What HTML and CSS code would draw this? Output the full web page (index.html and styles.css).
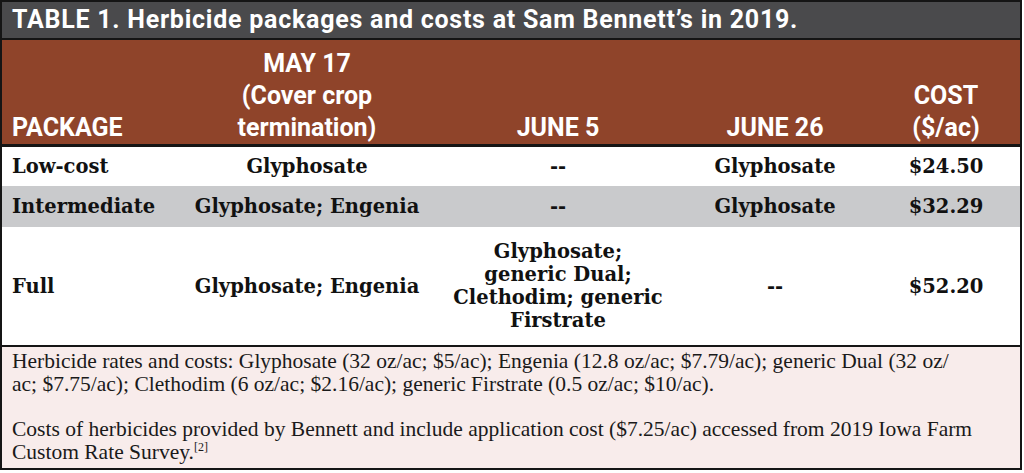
FILE: index.html
```html
<!DOCTYPE html>
<html lang="en">
<head>
<meta charset="utf-8">
<title>Table 1</title>
<link rel="stylesheet" href="styles.css">
</head>
<body>
<div class="card">
  <div class="title">TABLE 1. Herbicide packages and costs at Sam Bennett’s in 2019.</div>
  <table class="grid">
    <colgroup>
      <col class="c1"><col class="c2"><col class="c3"><col class="c4"><col class="c5">
    </colgroup>
    <thead>
      <tr>
        <th class="left">PACKAGE</th>
        <th>MAY 17<br>(Cover crop<br>termination)</th>
        <th>JUNE 5</th>
        <th>JUNE 26</th>
        <th>COST<br>($/ac)</th>
      </tr>
    </thead>
    <tbody>
      <tr class="row first">
        <td class="left">Low-cost</td>
        <td>Glyphosate</td>
        <td>--</td>
        <td>Glyphosate</td>
        <td>$24.50</td>
      </tr>
      <tr class="row alt">
        <td class="left">Intermediate</td>
        <td>Glyphosate; Engenia</td>
        <td>--</td>
        <td>Glyphosate</td>
        <td>$32.29</td>
      </tr>
      <tr class="row tall">
        <td class="left">Full</td>
        <td>Glyphosate; Engenia</td>
        <td>Glyphosate;<br>generic Dual;<br>Clethodim; generic<br>Firstrate</td>
        <td>--</td>
        <td>$52.20</td>
      </tr>
    </tbody>
  </table>
  <div class="notes">
    <p>Herbicide rates and costs: Glyphosate (32 oz/ac; $5/ac); Engenia (12.8 oz/ac; $7.79/ac); generic Dual (32 oz/<br>ac; $7.75/ac); Clethodim (6 oz/ac; $2.16/ac); generic Firstrate (0.5 oz/ac; $10/ac).</p>
    <p>Costs of herbicides provided by Bennett and include application cost ($7.25/ac) accessed from 2019 Iowa Farm<br>Custom Rate Survey.<sup>[2]</sup></p>
  </div>
</div>
</body>
</html>
```

FILE: styles.css
```css
html, body {
  margin: 0;
  padding: 0;
  background: #ffffff;
}

.card {
  width: 1018px;
  border: 2px solid #151515;
  background: #ffffff;
}

.title {
  height: 38px;
  box-sizing: border-box;
  background: #4a4a4c;
  color: #ffffff;
  font-family: Roboto, "Liberation Sans", sans-serif;
  font-weight: 700;
  font-size: 25px;
  letter-spacing: 0.75px;
  line-height: 36px;
  padding: 0 10px;
  border-bottom: 2px solid #151515;
  white-space: nowrap;
}

.grid {
  width: 1018px;
  border-collapse: collapse;
  table-layout: fixed;
}

.c1 { width: 174px; }
.c2 { width: 262px; }
.c3 { width: 240px; }
.c4 { width: 194px; }
.c5 { width: 148px; }

.grid thead th {
  background: #8f442a;
  color: #ffffff;
  font-family: Roboto, "Liberation Sans", sans-serif;
  font-weight: 700;
  font-size: 25px;
  line-height: 32px;
  height: 104px;
  vertical-align: bottom;
  text-align: center;
  padding: 0 6px 0;
  border-bottom: 3px solid #151515;
}

.grid th.left,
.grid td.left {
  text-align: left;
  padding-left: 10px;
}

.grid td {
  font-family: "DejaVu Serif", "Liberation Serif", serif;
  font-weight: 700;
  font-size: 19.5px;
  line-height: 23px;
  color: #111111;
  text-align: center;
  vertical-align: middle;
  padding: 0 6px;
}

.first td {
  height: 39px;
}

.alt td {
  height: 41px;
  background: #c9cacc;
}

.tall td {
  height: 118px;
}

.notes {
  background: #f8eceb;
  border-top: 2px solid #151515;
  padding: 3px 10px 4px;
  font-family: "Liberation Serif", serif;
  font-size: 21.5px;
  line-height: 23px;
  color: #1a1a1a;
}

.notes p {
  margin: 0;
  white-space: nowrap;
}

.notes p + p {
  margin-top: 22px;
}

.notes sup {
  font-size: 12px;
  line-height: 0;
  vertical-align: 8px;
}
```
